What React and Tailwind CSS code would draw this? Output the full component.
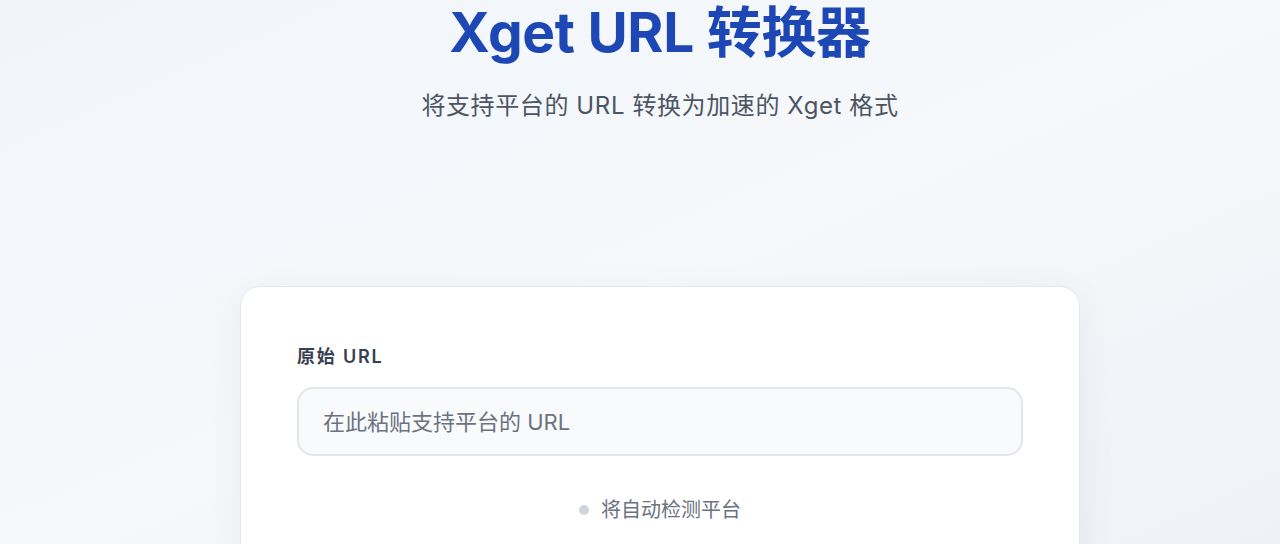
import React, { useState } from "react";

const sans = "font-['Inter','Noto_Sans_CJK_SC',sans-serif]";

const App = () => {
  const [url, setUrl] = useState("");

  return (
    <main
      className={`min-h-screen w-full bg-gradient-to-br from-[#f1f5fa] via-[#f6f8fb] to-[#eef2f6] pl-10 ${sans}`}
    >
      <div className="flex flex-col items-center">
        <h1 className="text-[55px] leading-[64px] font-bold text-[#1d47b4] tracking-[-0.3px]">
          Xget URL 转换器
        </h1>
        <p className="mt-[26px] text-[24px] leading-8 text-[#4b5563] tracking-[0.6px]">
          将支持平台的 URL 转换为加速的 Xget 格式
        </p>

        <section className="mt-[164px] w-[840px] rounded-[20px] border border-[#e3e8ef] bg-white px-14 pt-14 pb-10 shadow-[0_10px_40px_rgba(15,23,42,0.06)]">
          <label className="block text-[18px] leading-7 font-semibold tracking-[0.1em] text-[#374151]">
            原始 URL
          </label>
          <input
            value={url}
            onChange={(e) => setUrl(e.target.value)}
            placeholder="在此粘贴支持平台的 URL"
            className={`mt-4 block h-[69px] w-full rounded-2xl border-2 border-[#e2e6ea] bg-[#f8fafc] px-6 text-[22px] text-[#111827] placeholder:text-[#6b7280] outline-none ${sans}`}
          />
          <div className="mt-10 flex items-center justify-center gap-3">
            <span className="h-[10px] w-[10px] rounded-full bg-[#d1d5db]" />
            <span className="text-[20px] leading-7 text-[#6b7280]">将自动检测平台</span>
          </div>
        </section>
      </div>
    </main>
  );
};

export default App;
